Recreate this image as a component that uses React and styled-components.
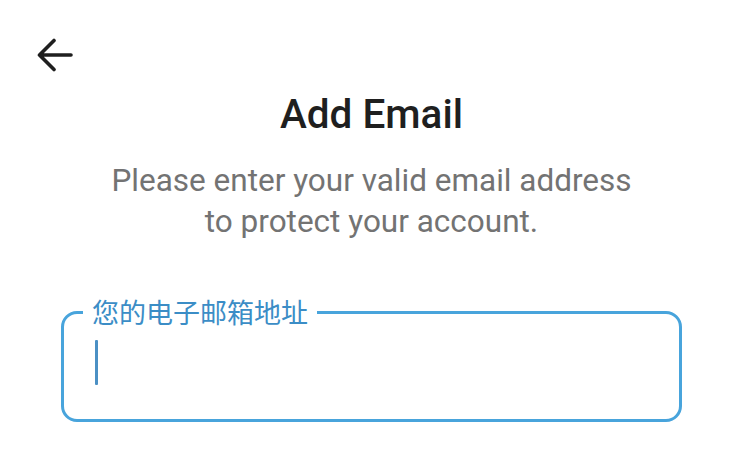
import styled, { createGlobalStyle } from 'styled-components'

const GlobalStyle = createGlobalStyle`
    html, body {
        margin:0;
        padding:0;
        background:#ffffff;
    }
    body {
        font-family:Roboto, "Noto Sans", "Noto Sans CJK SC", sans-serif;
    }
`

function BackArrow() {
    return (
        <svg width="36" height="36" viewBox="0 0 36 36" fill="none">
            <path
                d="M34 18H3M17 3.5L2.5 18L17 32.5"
                stroke="#1f1f1f"
                strokeWidth="3.6"
                strokeLinecap="round"
                strokeLinejoin="round"
            />
        </svg>
    )
}

function App() {
    return (
        <Page>
            <GlobalStyle />
            <TopBar>
                <BackButton aria-label="back">
                    <BackArrow />
                </BackButton>
            </TopBar>
            <Content>
                <Title>Add Email</Title>
                <Subtitle>
                    Please enter your valid email address
                    <br />
                    to protect your account.
                </Subtitle>
                <Field>
                    <FieldLabel>您的电子邮箱地址</FieldLabel>
                    <FieldBody>
                        <Caret />
                    </FieldBody>
                </Field>
            </Content>
        </Page>
    )
}

export default App;

const Page = styled.div`
    width:734px;
    height:459px;
    overflow:hidden;
    background:#fff;
`;

const TopBar = styled.div`
    display:flex;
    align-items:center;
    padding:37px 0 0 37px;
    height:36px;
`;

const BackButton = styled.button`
    border:none;
    background:none;
    padding:0;
    margin:0;
    display:flex;
    cursor:pointer;
`;

const Content = styled.div`
    display:flex;
    flex-direction:column;
    align-items:center;
    padding:0 52px 0 61px;
`;

const Title = styled.h1`
    margin:17px 0 0;
    font-size:40.5px;
    line-height:48px;
    font-weight:500;
    color:#1f1f1f;
`;

const Subtitle = styled.p`
    margin:22px 0 0;
    font-size:31.5px;
    line-height:41px;
    font-weight:400;
    color:#737373;
    text-align:center;
`;

const Field = styled.fieldset`
    align-self:stretch;
    margin:54px 0 0;
    padding:0;
    border:3px solid #48a4dc;
    border-radius:16px;
    min-width:0;
`;

const FieldLabel = styled.legend`
    margin-left:19px;
    padding:0 9px;
    font-family:"Noto Sans CJK SC", sans-serif;
    font-size:27px;
    line-height:32px;
    color:#3b8dc6;
`;

const FieldBody = styled.div`
    height:91px;
    padding:12px 0 0 31px;
    box-sizing:border-box;
`;

const Caret = styled.span`
    display:block;
    width:3px;
    height:45px;
    background:#4b90c4;
    border-radius:1px;
`;
